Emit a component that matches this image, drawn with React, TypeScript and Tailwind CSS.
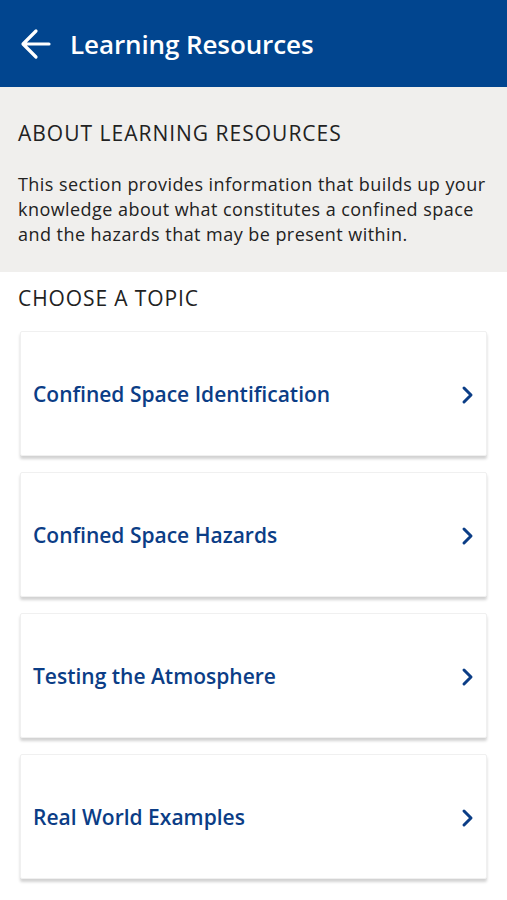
import React from "react";

const topics = [
  "Confined Space Identification",
  "Confined Space Hazards",
  "Testing the Atmosphere",
  "Real World Examples",
];

function Chevron() {
  return (
    <svg width="16" height="20" viewBox="0 0 16 20" fill="none">
      <path d="M4 3 L11 10 L4 17" stroke="#0b3d86" strokeWidth="3" strokeLinecap="round" strokeLinejoin="round" />
    </svg>
  );
}

export default function App() {
  return (
    <div className="w-[507px] h-[900px] bg-white overflow-hidden" style={{ fontFamily: "'Open Sans', 'Noto Sans', sans-serif" }}>
      <header className="h-[87px] bg-[#01458f] flex items-center pl-[20px]">
        <svg width="32" height="32" viewBox="0 0 32 32" fill="none">
          <path d="M29 16 H4 M16 3 L3 16 L16 29" stroke="white" strokeWidth="3.2" strokeLinecap="round" strokeLinejoin="round" />
        </svg>
        <h1 className="ml-[18px] mt-[2px] text-white text-[26px] font-semibold tracking-[-0.1px]">Learning Resources</h1>
      </header>
      <section className="bg-[#f0efed] h-[185px] px-[18px] pt-[31px]">
        <h2 className="text-[21px] text-[#222] font-medium tracking-[1px] leading-[30px]">ABOUT LEARNING RESOURCES</h2>
        <p className="mt-[24px] text-[18px] leading-[25px] text-[#222] font-medium tracking-[0.45px]">
          This section provides information that builds up your knowledge about what constitutes a confined space and the hazards that may be present within.
        </p>
      </section>
      <h2 className="px-[18px] mt-[11px] text-[21px] text-[#222] font-medium tracking-[0.9px] leading-[30px]">CHOOSE A TOPIC</h2>
      <div className="mt-[18px] px-[20px] flex flex-col gap-[16px]">
        {topics.map((t) => (
          <div
            key={t}
            className="h-[125px] bg-white border border-[#f0f0f0] shadow-[0_3px_3px_rgba(0,0,0,0.18)] rounded-[2px] flex items-center justify-between pl-[12px] pr-[10px] pt-[3px]"
          >
            <span className="text-[21px] font-semibold text-[#0b3d86]">{t}</span>
            <Chevron />
          </div>
        ))}
      </div>
    </div>
  );
}
